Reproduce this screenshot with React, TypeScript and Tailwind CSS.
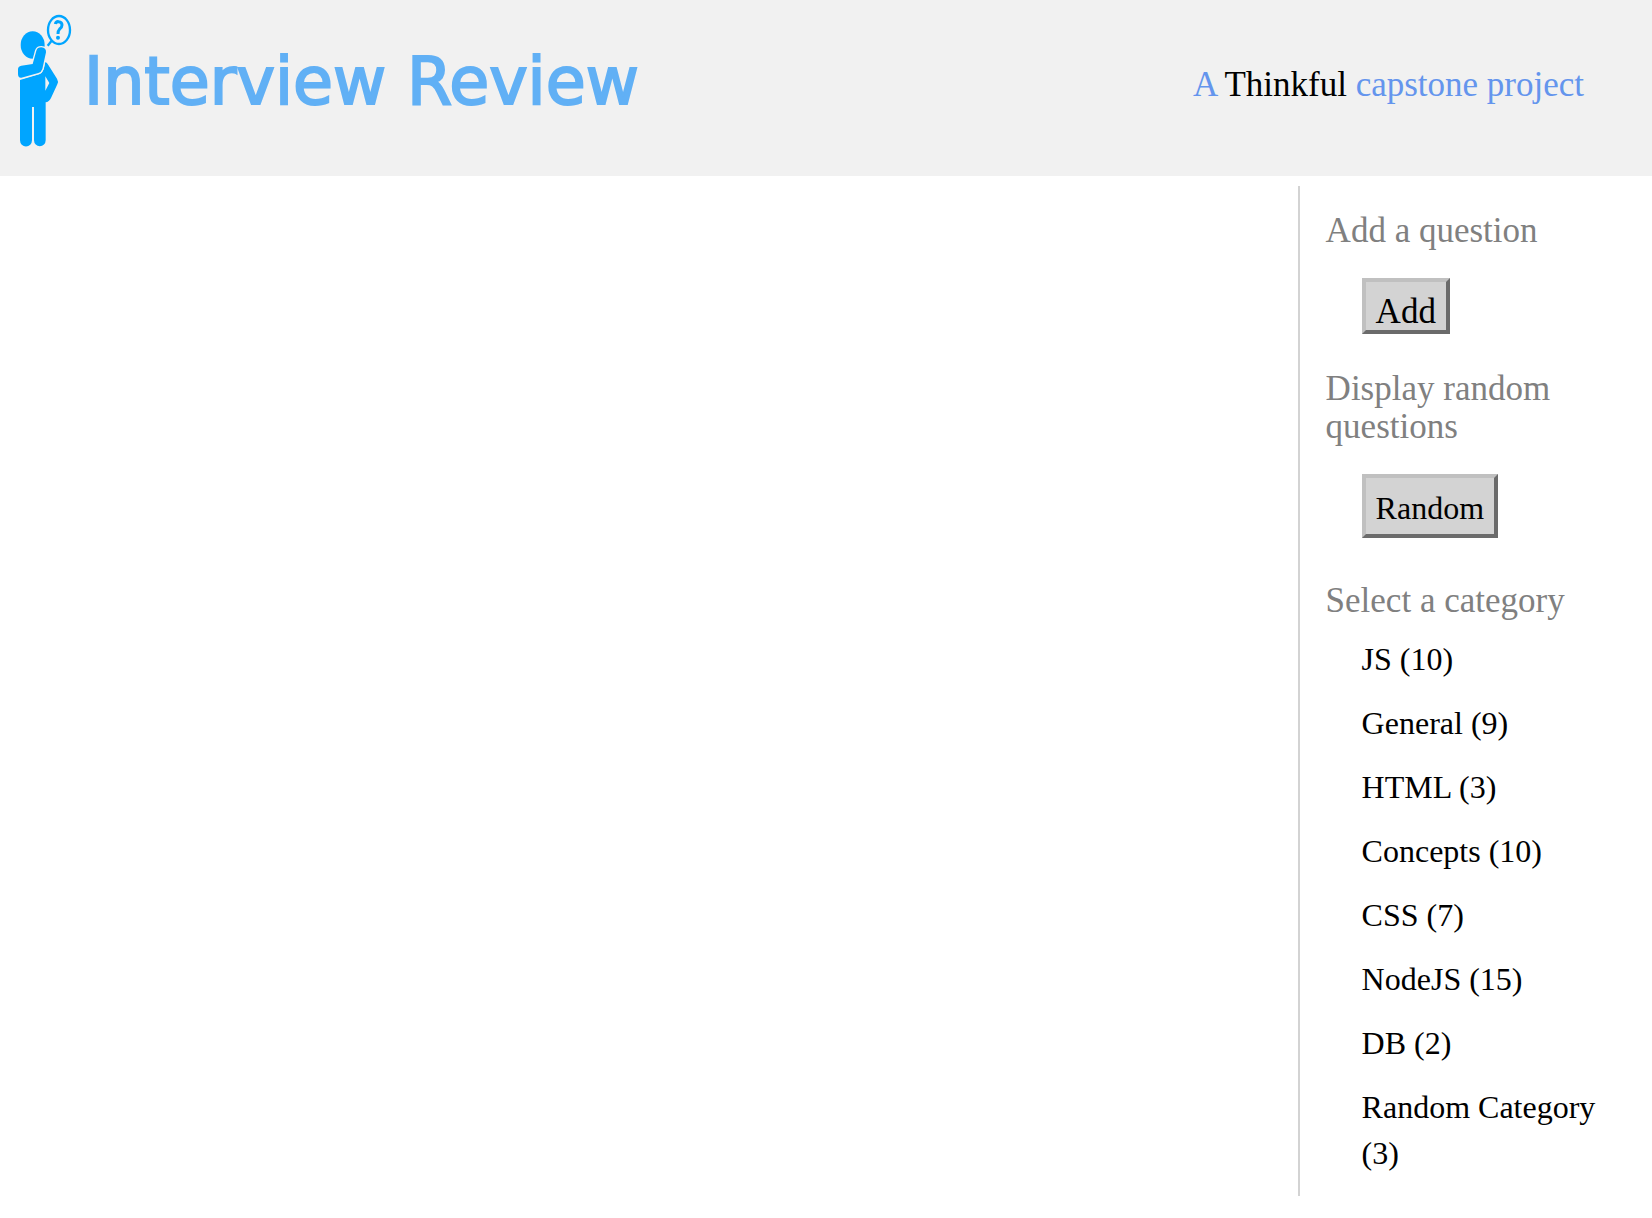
const categories = [
  { name: "JS", count: 10 },
  { name: "General", count: 9 },
  { name: "HTML", count: 3 },
  { name: "Concepts", count: 10 },
  { name: "CSS", count: 7 },
  { name: "NodeJS", count: 15 },
  { name: "DB", count: 2 },
  { name: "Random Category", count: 3 },
];

function ThinkerLogo() {
  return (
    <svg viewBox="0 0 240 528" className="h-44 w-20 shrink-0" aria-hidden="true">
      <ellipse cx="98" cy="135" rx="36" ry="41" fill="#00a5ff" />
      <path
        d="M60 240 L120 222 Q128 218 132 205 L136 186 Q141 188 145 195 L171 236 Q176 244 172 253 L153 294 Q147 306 137 307 V421 A17.500 18 0 0 1 102 421 V321 H96 V421 A17.500 18 0 0 1 60 421 Z M136 229 V272 L148 249 Z"
        fill="#00a5ff"
        fillRule="evenodd"
      />
      <path
        d="M109 152 Q112 142 124 142 Q139 143 138 157 L127 207 Q124 216 115 219 L64 233 Q54 234 54 222 V208 Q54 199 64 197 L98 192 Z"
        fill="#00a5ff"
        stroke="#f1f1f1"
        strokeWidth="8"
        paintOrder="stroke"
      />
      <ellipse cx="177" cy="90" rx="33" ry="42" fill="none" stroke="#00a5ff" strokeWidth="7" />
      <path d="M155 122 L143 137" stroke="#00a5ff" strokeWidth="7" />
      <path
        d="M166 72 Q168 64 176 65 Q186 66 186 75 Q186 82 179 87 Q174 92 174 102"
        fill="none"
        stroke="#00a5ff"
        strokeWidth="9"
      />
      <ellipse cx="174" cy="113" rx="6" ry="6" fill="#00a5ff" />
    </svg>
  );
}

const heading = "text-[35px] leading-[38px] text-[#808080]";
const button =
  "mt-7 ml-9 block border-4 border-t-[#c0c0c0] border-l-[#c0c0c0] border-r-[#6b6b6b] border-b-[#6b6b6b] bg-[#d3d3d3] px-[10px] pt-3 leading-9 text-black";

export default function App() {
  return (
    <div className="min-h-screen bg-white font-['Liberation_Serif',serif]">
      <header className="flex items-start justify-between bg-[#f1f1f1] pr-17">
        <div className="flex">
          <ThinkerLogo />
          <h1 className="ml-1 pt-[50px] font-['DejaVu_Sans',sans-serif] text-[65px] leading-16 whitespace-nowrap text-[#61b0f5] [-webkit-text-stroke:2px_#61b0f5]">
            Interview Review
          </h1>
        </div>
        <p className="pt-[66px] text-[35px] leading-[38px] whitespace-nowrap text-[#6495ed]">
          A{" "}
          <a href="#thinkful" className="text-black">
            Thinkful
          </a>{" "}
          capstone project
        </p>
      </header>

      <div className="flex pt-[10px]">
        <main className="flex-1" />
        <aside className="mr-6 w-1/5 border-l-2 border-[#d3d3d3] pt-[26px] pb-5 pl-[26px]">
          <h2 className={heading}>Add a question</h2>
          <button type="button" className={`${button} text-[35px]`}>
            Add
          </button>
          <h2 className={`${heading} mt-9`}>Display random questions</h2>
          <button type="button" className={`${button} pb-2 text-[32px]`}>
            Random
          </button>
          <h2 className={`${heading} mt-11`}>Select a category</h2>
          <ul className="mt-4 flex flex-col gap-[18px] pl-9 text-[32px] leading-[46px] text-black">
            {categories.map((c) => (
              <li key={c.name}>
                <a href="#category" className="block">
                  {c.name} ({c.count})
                </a>
              </li>
            ))}
          </ul>
        </aside>
      </div>
    </div>
  );
}
